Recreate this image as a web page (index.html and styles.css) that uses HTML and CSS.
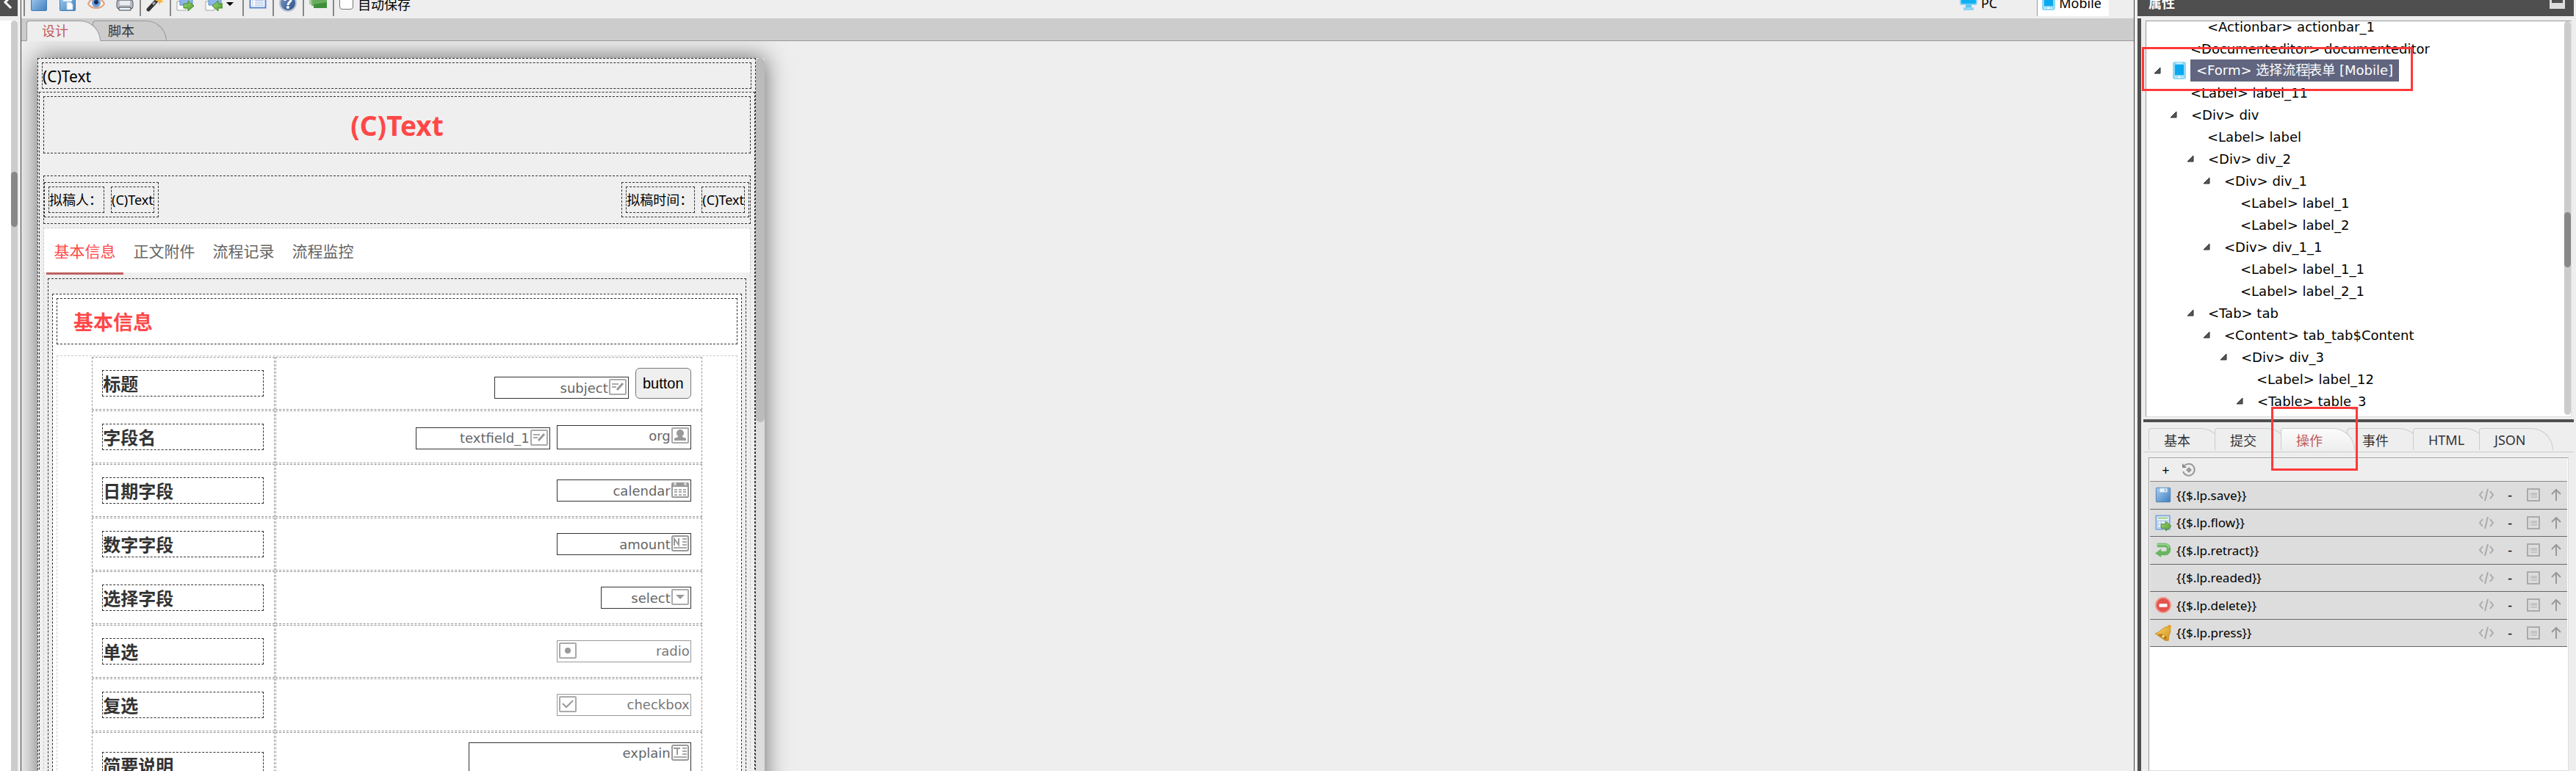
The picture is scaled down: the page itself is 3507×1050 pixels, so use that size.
FILE: index.html
```html
<!DOCTYPE html>
<html lang="zh-CN">
<head>
  <meta charset="UTF-8">
  <meta name="viewport" content="width=device-width, initial-scale=1.0">
  <title>Form Designer</title>
  <link rel="stylesheet" href="styles.css">
</head>
<body>
  <svg class="defs" aria-hidden="true">
    <defs>
      <linearGradient id="blue" x1="0" y1="0" x2="1" y2="1">
        <stop offset="0" stop-color="#a9d0f2"/>
        <stop offset="1" stop-color="#3f7fc0"/>
      </linearGradient>
      <linearGradient id="green" x1="0" y1="0" x2="1" y2="1">
        <stop offset="0" stop-color="#a5d77c"/>
        <stop offset="1" stop-color="#4d9a2b"/>
      </linearGradient>
      <linearGradient id="navy" x1="0" y1="0" x2="1" y2="1">
        <stop offset="0" stop-color="#7e9cc8"/>
        <stop offset="1" stop-color="#274d86"/>
      </linearGradient>
      <linearGradient id="gold" x1="0" y1="0" x2="1" y2="1">
        <stop offset="0" stop-color="#fbd867"/>
        <stop offset="1" stop-color="#cf8c1c"/>
      </linearGradient>
    </defs>
    <symbol id="i-save" viewBox="0 0 24 24">
      <rect x="1.500" y="1.500" width="21" height="21" rx="1" fill="url(#blue)" stroke="#4478b0"/>
      <path d="M7 2h11v6H7z" fill="#e6f1fb"/>
      <path d="M14 3h2v4h-2z" fill="#8ab2d8"/>
    </symbol>
    <symbol id="i-saveas" viewBox="0 0 24 24">
      <rect x="1.500" y="1.500" width="21" height="21" rx="1" fill="url(#blue)" stroke="#4478b0"/>
      <path d="M6 2h12v8H6z" fill="#e6f1fb"/>
      <path d="M11 11h5l3 3v7h-8z" fill="#fff" stroke="#b8cfe8"/>
    </symbol>
    <symbol id="i-eye" viewBox="0 0 24 24">
      <path d="M1 13C5 4 19 4 23 13C19 21 5 21 1 13z" fill="#fff4ec" stroke="#dfa27e" stroke-width="2"/>
      <circle cx="12" cy="12" r="6" fill="#6d9fdc"/>
      <circle cx="12" cy="11" r="3" fill="#14305f"/>
    </symbol>
    <symbol id="i-print" viewBox="0 0 24 24">
      <path d="M5 2h14v8H5z" fill="#cfe6fa" stroke="#6c8fb5"/>
      <rect x="1" y="8" width="22" height="12" rx="3" fill="#b9bcc2" stroke="#55585e"/>
      <path d="M5 9h14v6H5z" fill="#e9edf2"/>
      <path d="M4 18h16v4H4z" fill="#eaf5fe" stroke="#3d4045"/>
    </symbol>
    <symbol id="i-wand" viewBox="0 0 24 24">
      <path d="M3 21L15 8" stroke="#333" stroke-width="5" stroke-linecap="round"/>
      <path d="M9 14l3-3" stroke="#aaa" stroke-width="3"/>
      <path d="M17 1l2 4 4-1-2 4 3 3-4 0-2 4-1-5-5-1 4-3z" fill="#f7b63c"/>
    </symbol>
    <symbol id="i-out" viewBox="0 0 24 24">
      <path d="M1 10h12v12H1z" fill="#fff" stroke="#a4a4a4"/>
      <path d="M5 0h17v15H5z" fill="#8fb6ea" stroke="#5d8bc8"/>
      <path d="M10 13h6V9l8 7-8 7v-4h-6z" fill="url(#green)" stroke="#3f8a24"/>
    </symbol>
    <symbol id="i-in" viewBox="0 0 24 24">
      <path d="M1 10h12v12H1z" fill="#fff" stroke="#a4a4a4"/>
      <path d="M5 0h17v15H5z" fill="#8fb6ea" stroke="#5d8bc8"/>
      <path d="M24 13h-6V9l-8 7 8 7v-4h6z" fill="url(#green)" stroke="#3f8a24"/>
    </symbol>
    <symbol id="i-list" viewBox="0 0 24 24">
      <rect x="1.500" y="1.500" width="21" height="20" fill="#fff" stroke="#5b86cf" stroke-width="2"/>
      <path d="M4 9h2m2 0h12M4 12h2m2 0h12M4 15h2m2 0h12M4 18h2m2 0h12" stroke="#86a5d8"/>
    </symbol>
    <symbol id="i-help" viewBox="0 0 24 24">
      <circle cx="12" cy="12" r="11" fill="url(#navy)" stroke="#b9c2cf" stroke-width="2"/>
      <path d="M8 9c0-5 8-5 8-1c0 3-4 3-4 7" fill="none" stroke="#fff" stroke-width="3"/>
      <circle cx="12" cy="18" r="2" fill="#fff"/>
    </symbol>
    <symbol id="i-layers" viewBox="0 0 24 24">
      <rect x="0" y="2" width="17" height="15" fill="#a7cfa5"/>
      <rect x="3" y="5" width="17" height="14" fill="#73b06c"/>
      <rect x="6" y="7" width="18" height="15" fill="#3f8f3a"/>
      <path d="M6 7h18v7L6 17z" fill="#66ad5e"/>
    </symbol>
    <symbol id="i-pc" viewBox="0 0 24 24">
      <rect x="1" y="1" width="22" height="15" rx="2" fill="#0fb1f0" stroke="#8ed4f5" stroke-width="2"/>
      <path d="M8 16h8v5H8z" fill="#5cc6f3"/>
      <path d="M5 20h14v4H5z" fill="#8ed4f5"/>
    </symbol>
    <symbol id="i-phone" viewBox="0 0 18 24">
      <rect width="18" height="24" rx="3" fill="#8ed8f7"/>
      <path d="M3 4h12v14H3z" fill="#0aa9ef"/>
      <path d="M5 2h8M3 21h3m6 0h3" stroke="#fff"/>
      <path d="M7 20h4v2H7z" fill="#fff"/>
    </symbol>
    <symbol id="i-text" viewBox="0 0 24 22">
      <rect x="1" y="1" width="22" height="20" rx="1" fill="#fff" stroke="#aaa" stroke-width="2"/>
      <path d="M4 7h9M4 11h6" stroke="#aaa" stroke-width="2"/>
      <path d="M11 15l8-9" stroke="#999" stroke-width="3"/>
    </symbol>
    <symbol id="i-org" viewBox="0 0 24 22">
      <rect x="1" y="1" width="22" height="20" rx="1" fill="#fff" stroke="#aaa" stroke-width="2"/>
      <circle cx="12" cy="8" r="5" fill="#999"/>
      <path d="M10 11h4l1 2 5 2v3H4v-3l5-2z" fill="#999"/>
    </symbol>
    <symbol id="i-calendar" viewBox="0 0 24 22">
      <rect x="1" y="2" width="22" height="19" rx="1" fill="#fff" stroke="#999" stroke-width="2"/>
      <path d="M1 2h22v5H1z" fill="#999"/>
      <path d="M5 0v5M19 0v5" stroke="#ddd" stroke-width="3"/>
      <path d="M4 11h4m2 0h4m2 0h4M4 14h4m2 0h4m2 0h4M4 18h4m2 0h4m2 0h4" stroke="#aaa" stroke-width="2"/>
    </symbol>
    <symbol id="i-number" viewBox="0 0 24 22">
      <rect x="1" y="1" width="22" height="20" rx="2" fill="#fff" stroke="#999" stroke-width="2"/>
      <path d="M4 14V5l6 8V4" fill="none" stroke="#999" stroke-width="2"/>
      <path d="M15 5h6M15 9h6M15 13h6M3 17h18" stroke="#aaa" stroke-width="2"/>
    </symbol>
    <symbol id="i-area" viewBox="0 0 24 22">
      <rect x="1" y="1" width="22" height="20" rx="2" fill="#fff" stroke="#999" stroke-width="2"/>
      <path d="M3 5h9M8 5v9" fill="none" stroke="#999" stroke-width="2"/>
      <path d="M15 5h6M15 9h6M15 13h6M3 17h18" stroke="#aaa" stroke-width="2"/>
    </symbol>
    <symbol id="i-select" viewBox="0 0 24 22">
      <rect x="1" y="1" width="22" height="20" rx="1" fill="#fff" stroke="#aaa" stroke-width="2"/>
      <path d="M6 8h12l-6 6z" fill="#999"/>
    </symbol>
    <symbol id="i-radio" viewBox="0 0 24 22">
      <rect x="1" y="1" width="22" height="20" rx="1" fill="#fff" stroke="#aaa" stroke-width="2"/>
      <circle cx="12" cy="11" r="4" fill="#999"/>
    </symbol>
    <symbol id="i-check" viewBox="0 0 24 22">
      <rect x="1" y="1" width="22" height="20" rx="1" fill="#fff" stroke="#aaa" stroke-width="2"/>
      <path d="M5 10l5 5 9-9" fill="none" stroke="#999" stroke-width="2"/>
    </symbol>
    <symbol id="i-flow" viewBox="0 0 24 24">
      <rect x="1.500" y="1.500" width="20" height="20" fill="#f3f8fe" stroke="#7aa5de" stroke-width="2"/>
      <path d="M4 5h15" stroke="#8fca6d" stroke-width="2"/>
      <path d="M4 9h15v10H4zM4 14h15M9 9v10M14 9v10" fill="none" stroke="#b9cfea" stroke-width="2"/>
      <path d="M9 14h7v-4l8 7-8 7v-4H9z" fill="url(#green)" stroke="#3f8a24"/>
    </symbol>
    <symbol id="i-retract" viewBox="0 0 24 24">
      <path d="M3 5h12c7 0 7 12 0 12H8" fill="none" stroke="#69b561" stroke-width="6"/>
      <path d="M9 10v13l-9-6z" fill="#69b561"/>
      <path d="M3 4h12c4 0 5 3 5 5" fill="none" stroke="#9ad392" stroke-width="2"/>
    </symbol>
    <symbol id="i-delete" viewBox="0 0 24 24">
      <circle cx="12" cy="12" r="11" fill="#e4544c" stroke="#ee9891" stroke-width="2"/>
      <rect x="6" y="10" width="12" height="5" rx="1" fill="#fff"/>
    </symbol>
    <symbol id="i-bell" viewBox="0 0 24 24">
      <path d="M0 13C8 11 11 3 18 3l4 2c3 6-3 9-2 18l-4 1z" fill="url(#gold)" stroke="#c98a20"/>
      <circle cx="21" cy="3" r="3" fill="#e2a52f"/>
      <path d="M3 14l13 8 1-4-6-4z" fill="#b37417"/>
      <circle cx="12" cy="17" r="2" fill="#ffe28a"/>
    </symbol>
    <symbol id="i-code" viewBox="0 0 22 18">
      <path d="M6 4L2 9l4 5M16 4l4 5-4 5M13 1L9 17" fill="none" stroke="#aaa" stroke-width="2"/>
    </symbol>
    <symbol id="i-props" viewBox="0 0 18 18">
      <path d="M1 1h16v16H1z" fill="none" stroke="#aaa" stroke-width="2"/>
      <path d="M4 7h1m1 0h8M4 9h1m1 0h8M4 12h1m1 0h8" stroke="#aaa" stroke-width="1"/>
    </symbol>
    <symbol id="i-up" viewBox="0 0 14 18">
      <path d="M7 17V2M1 8l6-6 6 6" fill="none" stroke="#999" stroke-width="2"/>
    </symbol>
    <symbol id="i-reset" viewBox="0 0 20 20">
      <path d="M4 4a8 8 0 1 1-2 8" fill="none" stroke="#999" stroke-width="2"/>
      <path d="M1 1v6h6z" fill="#888"/>
      <path d="M10 6l4 4-4 4-4-4z" fill="#999"/>
    </symbol>
    <symbol id="i-open" viewBox="0 0 10 10">
      <path d="M9 1v8H1z" fill="#555" stroke="#333"/>
    </symbol>
  </svg>

  <div class="designer">
    <aside class="left">
      <button class="collapse" aria-label="collapse"><svg viewBox="0 0 24 22"><path d="M15-5L7 3l8 8" fill="none" stroke="#fff" stroke-width="3"/></svg></button>
      <div class="left-list">
        <div class="left-scroll"><div class="left-thumb"></div></div>
      </div>
    </aside>

    <main class="main">
      <div class="toolbar">
        <div class="group">
          <button class="tool" aria-label="save"><svg><use href="#i-save"/></svg></button>
          <button class="tool" aria-label="save as"><svg><use href="#i-saveas"/></svg></button>
          <button class="tool" aria-label="preview"><svg><use href="#i-eye"/></svg></button>
          <button class="tool" aria-label="print"><svg><use href="#i-print"/></svg></button>
        </div>
        <div class="group">
          <button class="tool" aria-label="style"><svg><use href="#i-wand"/></svg></button>
        </div>
        <div class="group">
          <button class="tool" aria-label="export"><svg><use href="#i-out"/></svg></button>
          <button class="tool" aria-label="import"><svg><use href="#i-in"/></svg><span class="caret"></span></button>
        </div>
        <div class="group">
          <button class="tool list" aria-label="list"><svg><use href="#i-list"/></svg></button>
        </div>
        <div class="group">
          <button class="tool" aria-label="help"><svg><use href="#i-help"/></svg></button>
        </div>
        <div class="group">
          <button class="tool layers" aria-label="layers"><svg><use href="#i-layers"/></svg></button>
        </div>
        <div class="group">
          <label class="autosave"><input type="checkbox">自动保存</label>
        </div>
        <div class="modes">
          <button class="mode"><svg class="pc"><use href="#i-pc"/></svg>PC</button>
          <button class="mode on"><svg class="phone"><use href="#i-phone"/></svg>Mobile</button>
        </div>
      </div>
      <div class="view-tabs">
        <button class="view-tab on">设计</button>
        <button class="view-tab">脚本</button>
      </div>

      <div class="canvas">
        <div class="device">
          <div class="form">
            <div class="box top-label">(C)Text</div>
            <div class="box sheet">
              <div class="box title">(C)Text</div>
              <div class="box meta">
                <div class="box pair">
                  <div class="box small key">拟稿人：</div>
                  <div class="box small">(C)Text</div>
                </div>
                <div class="box pair">
                  <div class="box small key">拟稿时间：</div>
                  <div class="box small">(C)Text</div>
                </div>
              </div>
              <div class="box pale tab-widget">
                <div class="page-tabs">
                  <button class="page-tab on">基本信息</button>
                  <button class="page-tab">正文附件</button>
                  <button class="page-tab">流程记录</button>
                  <button class="page-tab">流程监控</button>
                </div>
                <div class="box tab-content">
                  <div class="box section">
                    <div class="box section-title">基本信息</div>
                    <div class="box pale table-widget">
                      <table>
                        <tr>
                          <th><label class="box" for="subject">标题</label></th>
                          <td><div class="fields">
                            <span class="field"><input type="text" id="subject" value="subject"><svg><use href="#i-text"/></svg></span>
                            <button class="plain">button</button>
                          </div></td>
                        </tr>
                        <tr>
                          <th><label class="box" for="org">字段名</label></th>
                          <td><div class="fields">
                            <span class="field"><input type="text" aria-label="textfield_1" value="textfield_1"><svg><use href="#i-text"/></svg></span>
                            <span class="field tall"><input type="text" id="org" value="org"><svg><use href="#i-org"/></svg></span>
                          </div></td>
                        </tr>
                        <tr>
                          <th><label class="box" for="calendar">日期字段</label></th>
                          <td><div class="fields">
                            <span class="field"><input type="text" id="calendar" value="calendar"><svg><use href="#i-calendar"/></svg></span>
                          </div></td>
                        </tr>
                        <tr>
                          <th><label class="box" for="amount">数字字段</label></th>
                          <td><div class="fields">
                            <span class="field"><input type="text" id="amount" value="amount"><svg><use href="#i-number"/></svg></span>
                          </div></td>
                        </tr>
                        <tr>
                          <th><label class="box" for="select">选择字段</label></th>
                          <td><div class="fields">
                            <span class="field short"><select id="select"><option>select</option></select><svg><use href="#i-select"/></svg></span>
                          </div></td>
                        </tr>
                        <tr>
                          <th><div class="box">单选</div></th>
                          <td><div class="fields">
                            <label class="field choice"><input type="radio"><svg><use href="#i-radio"/></svg>radio</label>
                          </div></td>
                        </tr>
                        <tr>
                          <th><div class="box">复选</div></th>
                          <td><div class="fields">
                            <label class="field choice"><input type="checkbox"><svg><use href="#i-check"/></svg>checkbox</label>
                          </div></td>
                        </tr>
                        <tr class="area-row">
                          <th><label class="box" for="explain">简要说明</label></th>
                          <td><div class="fields">
                            <span class="field area"><textarea id="explain">explain</textarea><svg><use href="#i-area"/></svg></span>
                          </div></td>
                        </tr>
                      </table>
                    </div>
                  </div>
                </div>
              </div>
            </div>
          </div>
          <div class="device-scroll"><div class="device-thumb"></div></div>
        </div>
      </div>
    </main>

    <aside class="right">
      <div class="right-head">
        <span>属性</span>
        <button class="min" aria-label="minimize"></button>
      </div>
      <div class="right-body">
        <div class="splitter"></div>
        <div class="right-content">
          <div class="tree-box">
            <ul class="tree">
              <li class="l2">&lt;Actionbar&gt; actionbar_1</li>
              <li class="l1">&lt;Documenteditor&gt; documenteditor</li>
              <li class="l0"><svg class="arrow"><use href="#i-open"/></svg><svg class="node-icon"><use href="#i-phone"/></svg><span class="selected">&lt;Form&gt; 选择流程<i class="cursor"></i>表单 [Mobile]</span></li>
              <li class="l1">&lt;Label&gt; label_11</li>
              <li class="l1"><svg class="arrow"><use href="#i-open"/></svg>&lt;Div&gt; div</li>
              <li class="l2">&lt;Label&gt; label</li>
              <li class="l2"><svg class="arrow"><use href="#i-open"/></svg>&lt;Div&gt; div_2</li>
              <li class="l3"><svg class="arrow"><use href="#i-open"/></svg>&lt;Div&gt; div_1</li>
              <li class="l4">&lt;Label&gt; label_1</li>
              <li class="l4">&lt;Label&gt; label_2</li>
              <li class="l3"><svg class="arrow"><use href="#i-open"/></svg>&lt;Div&gt; div_1_1</li>
              <li class="l4">&lt;Label&gt; label_1_1</li>
              <li class="l4">&lt;Label&gt; label_2_1</li>
              <li class="l2"><svg class="arrow"><use href="#i-open"/></svg>&lt;Tab&gt; tab</li>
              <li class="l3"><svg class="arrow"><use href="#i-open"/></svg>&lt;Content&gt; tab_tab$Content</li>
              <li class="l4"><svg class="arrow"><use href="#i-open"/></svg>&lt;Div&gt; div_3</li>
              <li class="l5">&lt;Label&gt; label_12</li>
              <li class="l5"><svg class="arrow"><use href="#i-open"/></svg>&lt;Table&gt; table_3</li>
            </ul>
            <div class="tree-scroll"><div class="tree-thumb"></div></div>
          </div>
          <div class="divider"></div>
          <div class="prop-tabs">
            <button class="prop-tab">基本</button>
            <button class="prop-tab">提交</button>
            <button class="prop-tab on">操作</button>
            <button class="prop-tab">事件</button>
            <button class="prop-tab">HTML</button>
            <button class="prop-tab">JSON</button>
          </div>
          <div class="props">
            <div class="props-bar">
              <button class="add">+</button>
              <button class="reset" aria-label="reset"><svg><use href="#i-reset"/></svg></button>
            </div>
            <ul class="actions">
              <li>
                <svg class="act-icon"><use href="#i-save"/></svg><span class="act-name">{{$.lp.save}}</span>
                <svg class="code"><use href="#i-code"/></svg><span class="dash">-</span><svg class="detail"><use href="#i-props"/></svg><svg class="up"><use href="#i-up"/></svg>
              </li>
              <li>
                <svg class="act-icon"><use href="#i-flow"/></svg><span class="act-name">{{$.lp.flow}}</span>
                <svg class="code"><use href="#i-code"/></svg><span class="dash">-</span><svg class="detail"><use href="#i-props"/></svg><svg class="up"><use href="#i-up"/></svg>
              </li>
              <li>
                <svg class="act-icon"><use href="#i-retract"/></svg><span class="act-name">{{$.lp.retract}}</span>
                <svg class="code"><use href="#i-code"/></svg><span class="dash">-</span><svg class="detail"><use href="#i-props"/></svg><svg class="up"><use href="#i-up"/></svg>
              </li>
              <li>
                <svg class="act-icon"></svg><span class="act-name">{{$.lp.readed}}</span>
                <svg class="code"><use href="#i-code"/></svg><span class="dash">-</span><svg class="detail"><use href="#i-props"/></svg><svg class="up"><use href="#i-up"/></svg>
              </li>
              <li>
                <svg class="act-icon"><use href="#i-delete"/></svg><span class="act-name">{{$.lp.delete}}</span>
                <svg class="code"><use href="#i-code"/></svg><span class="dash">-</span><svg class="detail"><use href="#i-props"/></svg><svg class="up"><use href="#i-up"/></svg>
              </li>
              <li>
                <svg class="act-icon"><use href="#i-bell"/></svg><span class="act-name">{{$.lp.press}}</span>
                <svg class="code"><use href="#i-code"/></svg><span class="dash">-</span><svg class="detail"><use href="#i-props"/></svg><svg class="up"><use href="#i-up"/></svg>
              </li>
            </ul>
          </div>
        </div>
      </div>
      <div class="mark mark-form"></div>
      <div class="mark mark-tab"></div>
    </aside>
  </div>
</body>
</html>
```
FILE: styles.css
```css
* {
  box-sizing: border-box;
}

html,
body {
  height: 100%;
  overflow: hidden;
}

body {
  margin: 0;
  background: #eee;
  color: #000;
  font: 18px "Noto Sans", "Noto Sans CJK SC", sans-serif;
}

button {
  margin: 0;
  padding: 0;
  border: 0;
  background: none;
  color: inherit;
  font: inherit;
}

input,
select,
textarea {
  margin: 0;
  font: inherit;
}

svg {
  display: block;
  flex: none;
}

ul {
  margin: 0;
  padding: 0;
  list-style: none;
}

.defs {
  position: absolute;
  width: 0;
  height: 0;
}

.designer {
  display: flex;
  height: 100%;
}

/* left strip */
.left {
  display: flex;
  flex-direction: column;
  flex: none;
  width: 29px;
  padding-right: 4px;
  border-right: 1px solid #444;
  gap: 6px;
}

.collapse {
  width: 24px;
  height: 22px;
  background: #4f4f4f;
}

.left-list {
  flex: 1;
  display: flex;
  justify-content: flex-end;
  width: 24px;
  background: #fff;
}

.left-scroll {
  width: 9px;
  padding-top: 206px;
  background: #ccc;
  border-radius: 5px 5px 0 0;
}

.left-thumb {
  height: 75px;
  background: #888;
  border-radius: 5px;
}

/* main */
.main {
  flex: 1;
  display: flex;
  flex-direction: column;
  min-width: 0;
}

.toolbar {
  display: flex;
  flex: none;
  height: 25px;
  padding: 0 34px 3px 3px;
}

.group {
  display: flex;
  align-items: flex-end;
  gap: 15px;
  padding: 0 8px 6px 7px;
  border-left: 2px solid #888;
}

.tool {
  display: flex;
  align-items: flex-end;
  gap: 5px;
}

.tool svg {
  width: 24px;
  height: 24px;
}

.tool.list,
.tool.layers {
  padding-bottom: 3px;
}

.caret {
  margin: 0 4px 8px 0;
  border: 5px solid transparent;
  border-top-color: #000;
  border-bottom: 0;
}

.autosave {
  display: flex;
  align-items: flex-end;
  gap: 6px;
  line-height: 20px;
}

.autosave input {
  appearance: none;
  width: 19px;
  height: 19px;
  margin-bottom: 3px;
  border: 1px solid #767676;
  border-radius: 4px;
  background: #fff;
}

.modes {
  display: flex;
  gap: 54px;
  margin-left: auto;
}

.mode {
  display: flex;
  align-items: flex-end;
  gap: 5px;
  line-height: 19px;
  padding-bottom: 8px;
}

.mode svg {
  height: 24px;
}

.mode .pc {
  width: 24px;
}

.mode .phone {
  width: 18px;
}

.mode.on {
  padding: 0 10px 8px 6px;
  background: #fff;
  border-left: 1px solid #999;
}

.view-tabs {
  display: flex;
  flex: none;
  align-items: flex-end;
  height: 31px;
  padding-left: 7px;
  background: #ccc;
  box-shadow: inset 0 -1px #999;
}

.view-tab {
  width: 101px;
  height: 28px;
  padding-left: 20px;
  border: 1px solid #999;
  border-radius: 4px 28px 0 0;
  color: #333;
  line-height: 26px;
  text-align: left;
}

.view-tab + .view-tab {
  margin-left: -11px;
}

.view-tab.on {
  z-index: 1;
  background: #eee;
  border-bottom-color: #eee;
  color: #c05a5a;
}

.canvas {
  flex: 1;
  min-height: 0;
  padding: 23px 0 0 22px;
  overflow: hidden;
}

.device {
  display: flex;
  width: 990px;
  background: #efefef;
  box-shadow: 0 0 30px #666;
}

.device-scroll {
  width: 12px;
  background: #ddd;
}

.device-thumb {
  height: 496px;
  background: #bbb;
  border-radius: 6px;
}

.box {
  border: 1px dashed #333;
}

.box.pale {
  border-color: #ccc;
}

.form {
  flex: 1;
  border: 1px dashed #333;
}

.top-label {
  height: 36px;
  margin: 5px 5px 4px;
  font-size: 21px;
  line-height: 36px;
}

.sheet {
  margin: 0 0 0 1px;
  padding: 5px;
}

.title {
  height: 78px;
  margin-bottom: 30px;
  color: #ff4747;
  font-size: 37px;
  font-weight: bold;
  line-height: 78px;
  text-align: center;
}

.meta {
  display: flex;
  justify-content: space-between;
  height: 66px;
  margin-bottom: 5px;
  padding: 8px 1px 8px 0;
}

.pair {
  display: flex;
  gap: 9px;
  padding: 5px;
}

.small {
  line-height: 34px;
}

.key {
  padding-right: 2px;
}

.tab-widget {
  padding-bottom: 5px;
}

.page-tabs {
  display: flex;
  gap: 3px;
  height: 63px;
  padding: 0 3px;
  background: linear-gradient(#fff 60px, #efefef 60px);
}

.page-tab {
  width: 105px;
  border-bottom: 3px solid transparent;
  color: #666;
  font-size: 21px;
}

.page-tab.on {
  border-bottom-color: #c06060;
  color: #ff4747;
}

.tab-content {
  margin: 5px 5px 0;
  padding: 20px 5px 5px;
}

.section {
  padding: 5px;
  background: #fff;
}

.section-title {
  height: 63px;
  margin-bottom: 15px;
  padding-left: 22px;
  color: #ff4747;
  font-size: 27px;
  font-weight: bold;
  line-height: 63px;
}

table {
  width: 90%;
  margin: 0 auto;
  border-spacing: 1px;
  table-layout: fixed;
}

th,
td {
  height: 72px;
  padding: 0 14px 0 13px;
  border: 1px dashed #999;
}

th {
  width: 30%;
}

.area-row th {
  height: 90px;
}

th .box {
  display: block;
  height: 36px;
  color: #333;
  font-size: 24px;
  line-height: 36px;
  text-align: left;
}

.fields {
  display: flex;
  justify-content: flex-end;
  align-items: flex-end;
  gap: 9px;
}

.field {
  display: flex;
  width: 183px;
  height: 30px;
  padding: 2px;
  border: 1px solid #333;
  color: #666;
  font-family: "DejaVu Sans", Verdana, sans-serif;
}

.field svg {
  width: 24px;
  height: 22px;
}

.field input,
.field select,
.field textarea {
  flex: 1;
  min-width: 0;
  height: 24px;
  padding: 0 1px 0 0;
  border: 0;
  outline: 0;
  background: none;
  color: inherit;
  text-align: right;
}

.field select {
  appearance: none;
  text-align-last: right;
}

.field textarea {
  resize: none;
  line-height: 24px;
}

.field.tall {
  height: 33px;
}

.field.short {
  width: 123px;
}

.field.area {
  width: 303px;
  height: 62px;
}

.field.choice {
  justify-content: space-between;
  border-color: #999;
  padding-right: 1px;
  color: #777;
  line-height: 24px;
}

.field.choice input {
  display: none;
}

.plain {
  width: 76px;
  height: 42px;
  border: 1px solid #777;
  border-radius: 6px;
  background: #efefef;
  font: 20px "Liberation Sans", Arial, sans-serif;
}

/* properties panel */
.right {
  position: relative;
  display: flex;
  flex-direction: column;
  flex: none;
  width: 602px;
  padding: 0 3px 0 4px;
  border-left: 1px solid #444;
}

.right-head {
  display: flex;
  justify-content: space-between;
  flex: none;
  align-items: flex-end;
  height: 22px;
  margin-bottom: 3px;
  padding: 0 12px 8px 15px;
  background: #4f4f4f;
  color: #fff;
  font-weight: bold;
  line-height: 20px;
}

.min {
  width: 21px;
  height: 20px;
  margin-bottom: 2px;
  border: 3px solid #ddd;
  border-bottom-width: 8px;
}

.right-body {
  flex: 1;
  display: flex;
  min-height: 0;
}

.splitter {
  width: 5px;
  background: #4f4f4f;
}

.right-content {
  flex: 1;
  display: flex;
  flex-direction: column;
  padding: 3px 0 0 3px;
}

.tree-box {
  display: flex;
  flex: none;
  height: 540px;
  margin: 0 3px 3px;
  border: 1px solid #ddd;
  border-top-color: #999;
  border-left-color: #999;
  background: #fff;
  overflow: hidden;
}

.tree {
  flex: 1;
  display: flex;
  flex-direction: column;
  justify-content: flex-end;
  padding-bottom: 6px;
  font-family: "DejaVu Sans", Verdana, "Noto Sans CJK SC", sans-serif;
}

.tree li {
  display: flex;
  align-items: center;
  flex: none;
  height: 30px;
}

.tree .l0 { padding-left: 38px; }
.tree .l1 { padding-left: 60px; }
.tree .l2 { padding-left: 83px; }
.tree .l3 { padding-left: 105px; }
.tree .l4 { padding-left: 128px; }
.tree .l5 { padding-left: 150px; }

.arrow {
  width: 10px;
  height: 10px;
  margin: 0 19px 0 -28px;
}

.node-icon {
  width: 18px;
  height: 24px;
  margin: 0 6px 0 -3px;
}

.selected {
  height: 30px;
  padding: 0 8px;
  background: #61657f;
  color: #fff;
  line-height: 30px;
}

.cursor {
  display: inline-block;
  width: 1px;
  height: 22px;
  margin-right: -1px;
  background: #fff;
  vertical-align: middle;
}

.tree-scroll {
  width: 9px;
  margin-bottom: 2px;
  padding-top: 260px;
  background: #ccc;
  border-radius: 5px;
}

.tree-thumb {
  height: 75px;
  background: #888;
  border-radius: 5px;
}

.divider {
  flex: none;
  height: 4px;
  background: #4f4f4f;
}

.prop-tabs {
  display: flex;
  flex: none;
  height: 41px;
  padding: 8px 0 0 7px;
  border-bottom: 1px solid #ccc;
}

.prop-tab {
  width: 101px;
  height: 30px;
  margin-right: -11px;
  padding-left: 20px;
  border: 1px solid #ccc;
  border-bottom: 0;
  border-radius: 4px 30px 0 0;
  background: #eee;
  color: #333;
  text-align: left;
}

.prop-tab.on {
  z-index: 1;
  background: linear-gradient(#fcfcfc, #eee);
  color: #c05a5a;
}

.props {
  flex: 1;
  margin: 7px 7px 0;
  padding: 1px;
  border: 1px solid #ddd;
  border-top-color: #999;
  border-left-color: #999;
  background: #fff;
}

.props-bar {
  display: flex;
  align-items: center;
  gap: 16px;
  height: 31px;
  padding-left: 16px;
  background: #eee;
  border-bottom: 1px solid #888;
}

.add {
  width: 11px;
}

.reset svg {
  width: 20px;
  height: 20px;
}

.actions {
  display: grid;
  grid-template-rows: repeat(6, 1fr);
  height: 225px;
}

.actions li {
  display: flex;
  align-items: center;
  padding: 0 8px 0 7px;
  background: #ddd;
  border-bottom: 1px solid #666;
}

.act-icon {
  width: 22px;
  height: 22px;
  margin-right: 7px;
}

.act-name {
  flex: 1;
  font-size: 17px;
}

.code {
  width: 22px;
  height: 18px;
}

.dash {
  margin: 0 20px 0 18px;
}

.detail {
  width: 18px;
  height: 18px;
  margin-right: 15px;
}

.up {
  width: 14px;
  height: 18px;
}

/* red marks over the panel */
.mark {
  position: absolute;
  border: 3px solid #ff3838;
  z-index: 2;
}

.mark-form {
  top: 64px;
  left: 10px;
  width: 369px;
  height: 60px;
}

.mark-tab {
  top: 554px;
  left: 186px;
  width: 118px;
  height: 87px;
}
```
